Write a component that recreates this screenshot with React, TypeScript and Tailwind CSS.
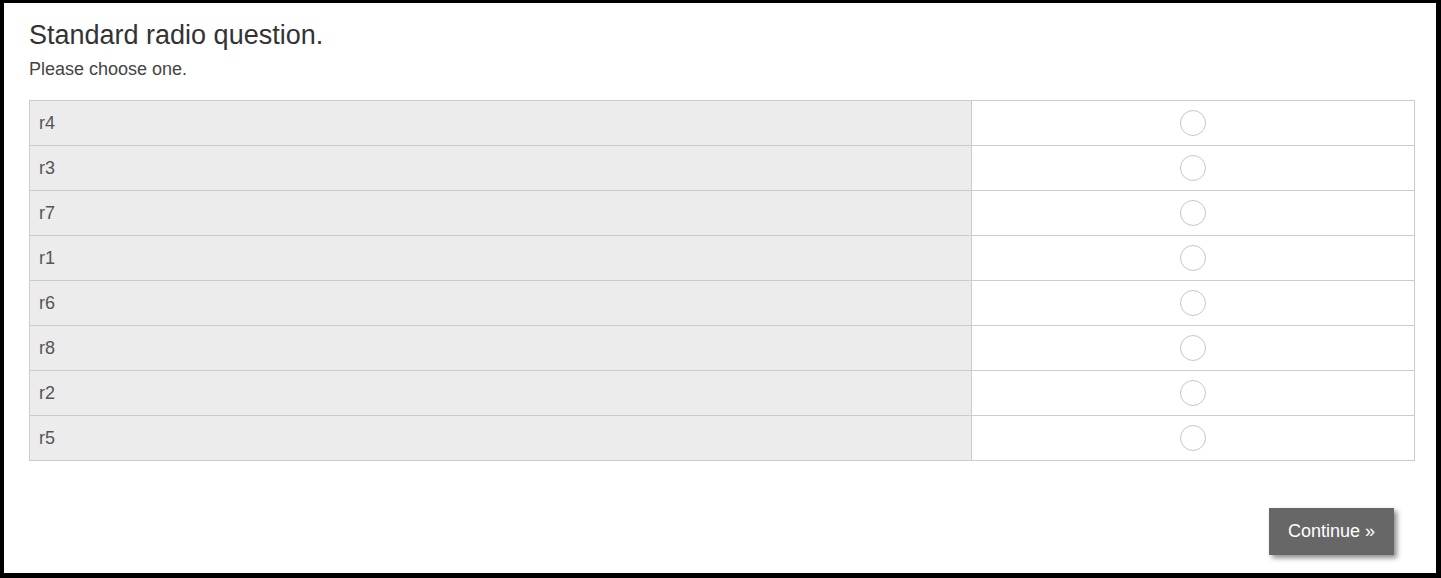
const rows = ["r4", "r3", "r7", "r1", "r6", "r8", "r2", "r5"];

const Radio = () => (
  <span className="block w-[26px] h-[26px] rounded-full border border-[#c6c6c6] bg-white" />
);

const App = () => {
  return (
    <div className="w-[1441px] h-[578px] bg-white border-black border-t-[3px] border-l-4 border-r-[5px] border-b-[5px] font-['Liberation_Sans',Arial,sans-serif]">
      <div className="pl-[25px] pr-[21px] pt-[16px]">
        <h1 className="text-[27px] leading-[32px] text-[#333]">Standard radio question.</h1>
        <p className="mt-[7px] text-[18px] leading-[22px] text-[#444]">Please choose one.</p>

        <table className="mt-[20px] w-full border-collapse">
          <tbody>
            {rows.map((r) => (
              <tr key={r} className="h-[45px]">
                <td className="w-[942px] border border-[#cccccc] bg-[#ececec] pl-[9px] text-[18px] text-[#555] align-middle">
                  {r}
                </td>
                <td className="border border-[#cccccc] bg-white align-middle">
                  <div className="flex justify-center">
                    <Radio />
                  </div>
                </td>
              </tr>
            ))}
          </tbody>
        </table>

        <div className="flex justify-end mt-[47px] pr-[21px]">
          <button className="w-[125px] h-[47px] bg-[#676767] text-white text-[18px] shadow-[3px_3px_5px_rgba(0,0,0,0.45)]">
            Continue »
          </button>
        </div>
      </div>
    </div>
  );
};

export default App;
